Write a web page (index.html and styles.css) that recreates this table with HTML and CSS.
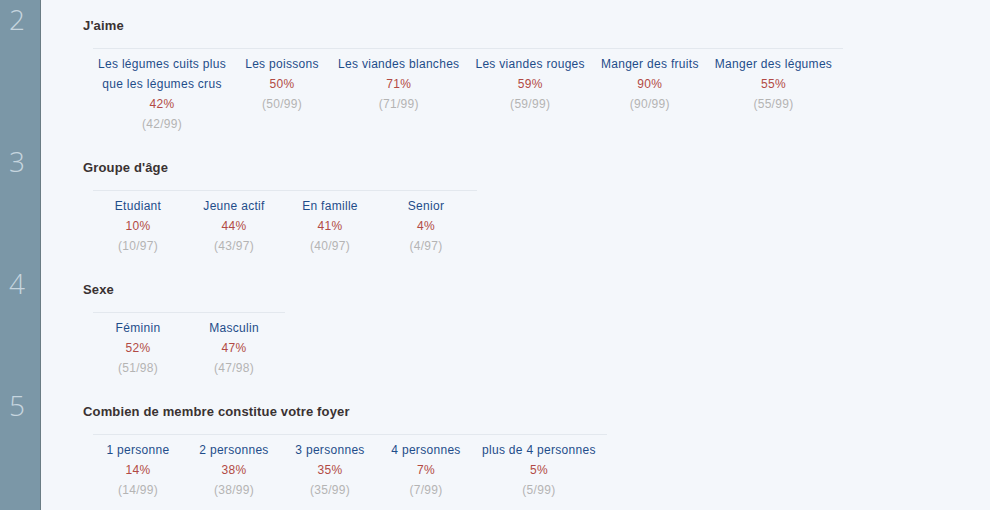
FILE: index.html
```html
<!DOCTYPE html>
<html lang="fr">
<head>
<meta charset="utf-8">
<title>Résultats</title>
<link rel="stylesheet" href="styles.css">
</head>
<body>
<div class="page">
  <section class="question">
    <div class="num">2</div>
    <div class="body">
      <h3 class="title">J'aime</h3>
      <table class="answers">
        <tr>
          <td><div class="label">Les légumes cuits plus<br>que les légumes crus</div><div class="pct">42%</div><div class="cnt">(42/99)</div></td>
          <td><div class="label">Les poissons</div><div class="pct">50%</div><div class="cnt">(50/99)</div></td>
          <td><div class="label">Les viandes blanches</div><div class="pct">71%</div><div class="cnt">(71/99)</div></td>
          <td><div class="label">Les viandes rouges</div><div class="pct">59%</div><div class="cnt">(59/99)</div></td>
          <td><div class="label">Manger des fruits</div><div class="pct">90%</div><div class="cnt">(90/99)</div></td>
          <td><div class="label">Manger des légumes</div><div class="pct">55%</div><div class="cnt">(55/99)</div></td>
        </tr>
      </table>
    </div>
  </section>
  <section class="question">
    <div class="num">3</div>
    <div class="body">
      <h3 class="title">Groupe d'âge</h3>
      <table class="answers">
        <tr>
          <td><div class="label">Etudiant</div><div class="pct">10%</div><div class="cnt">(10/97)</div></td>
          <td><div class="label">Jeune actif</div><div class="pct">44%</div><div class="cnt">(43/97)</div></td>
          <td><div class="label">En famille</div><div class="pct">41%</div><div class="cnt">(40/97)</div></td>
          <td><div class="label">Senior</div><div class="pct">4%</div><div class="cnt">(4/97)</div></td>
        </tr>
      </table>
    </div>
  </section>
  <section class="question">
    <div class="num">4</div>
    <div class="body">
      <h3 class="title">Sexe</h3>
      <table class="answers">
        <tr>
          <td><div class="label">Féminin</div><div class="pct">52%</div><div class="cnt">(51/98)</div></td>
          <td><div class="label">Masculin</div><div class="pct">47%</div><div class="cnt">(47/98)</div></td>
        </tr>
      </table>
    </div>
  </section>
  <section class="question">
    <div class="num">5</div>
    <div class="body">
      <h3 class="title">Combien de membre constitue votre foyer</h3>
      <table class="answers">
        <tr>
          <td><div class="label">1 personne</div><div class="pct">14%</div><div class="cnt">(14/99)</div></td>
          <td><div class="label">2 personnes</div><div class="pct">38%</div><div class="cnt">(38/99)</div></td>
          <td><div class="label">3 personnes</div><div class="pct">35%</div><div class="cnt">(35/99)</div></td>
          <td><div class="label">4 personnes</div><div class="pct">7%</div><div class="cnt">(7/99)</div></td>
          <td><div class="label">plus de 4 personnes</div><div class="pct">5%</div><div class="cnt">(5/99)</div></td>
        </tr>
      </table>
    </div>
  </section>
</div>
</body>
</html>
```

FILE: styles.css
```css
html, body {
  margin: 0;
  padding: 0;
  background: #f4f7fb;
  font-family: "Liberation Sans", Arial, sans-serif;
  font-size: 12px;
}

.page {
  display: flex;
  flex-direction: column;
  min-height: 510px;
  background: linear-gradient(to right, #7b97a7 0, #7b97a7 40px, #6a7c84 40px, #6a7c84 41px, #f4f7fb 41px);
}

.question {
  display: flex;
}

.num {
  width: 41px;
  flex: none;
  box-sizing: border-box;
  padding: 5px 0 0 9px;
  font-family: "Open Sans", "DejaVu Sans", sans-serif;
  font-weight: 300;
  font-size: 28px;
  line-height: 28px;
  color: #c6d5df;
  border-right: 1px solid #6a7c84;
}

.body {
  padding: 16px 0 8px 42px;
}

.title {
  margin: 0 0 12px 0;
  font-size: 13px;
  line-height: 20px;
  font-weight: bold;
  letter-spacing: 0.15px;
  color: #3a3232;
}

.answers {
  margin-left: 10px;
  border-collapse: collapse;
  border-top: 1px solid #e3e8ee;
}

.answers td {
  width: 80px;
  padding: 5px 11px 0 5px;
  text-align: center;
  vertical-align: top;
  line-height: 20px;
  letter-spacing: 0.3px;
  white-space: nowrap;
}

.label {
  color: #1f4d8a;
}

.pct {
  color: #b24a44;
}

.cnt {
  color: #b4b4b4;
}
```
